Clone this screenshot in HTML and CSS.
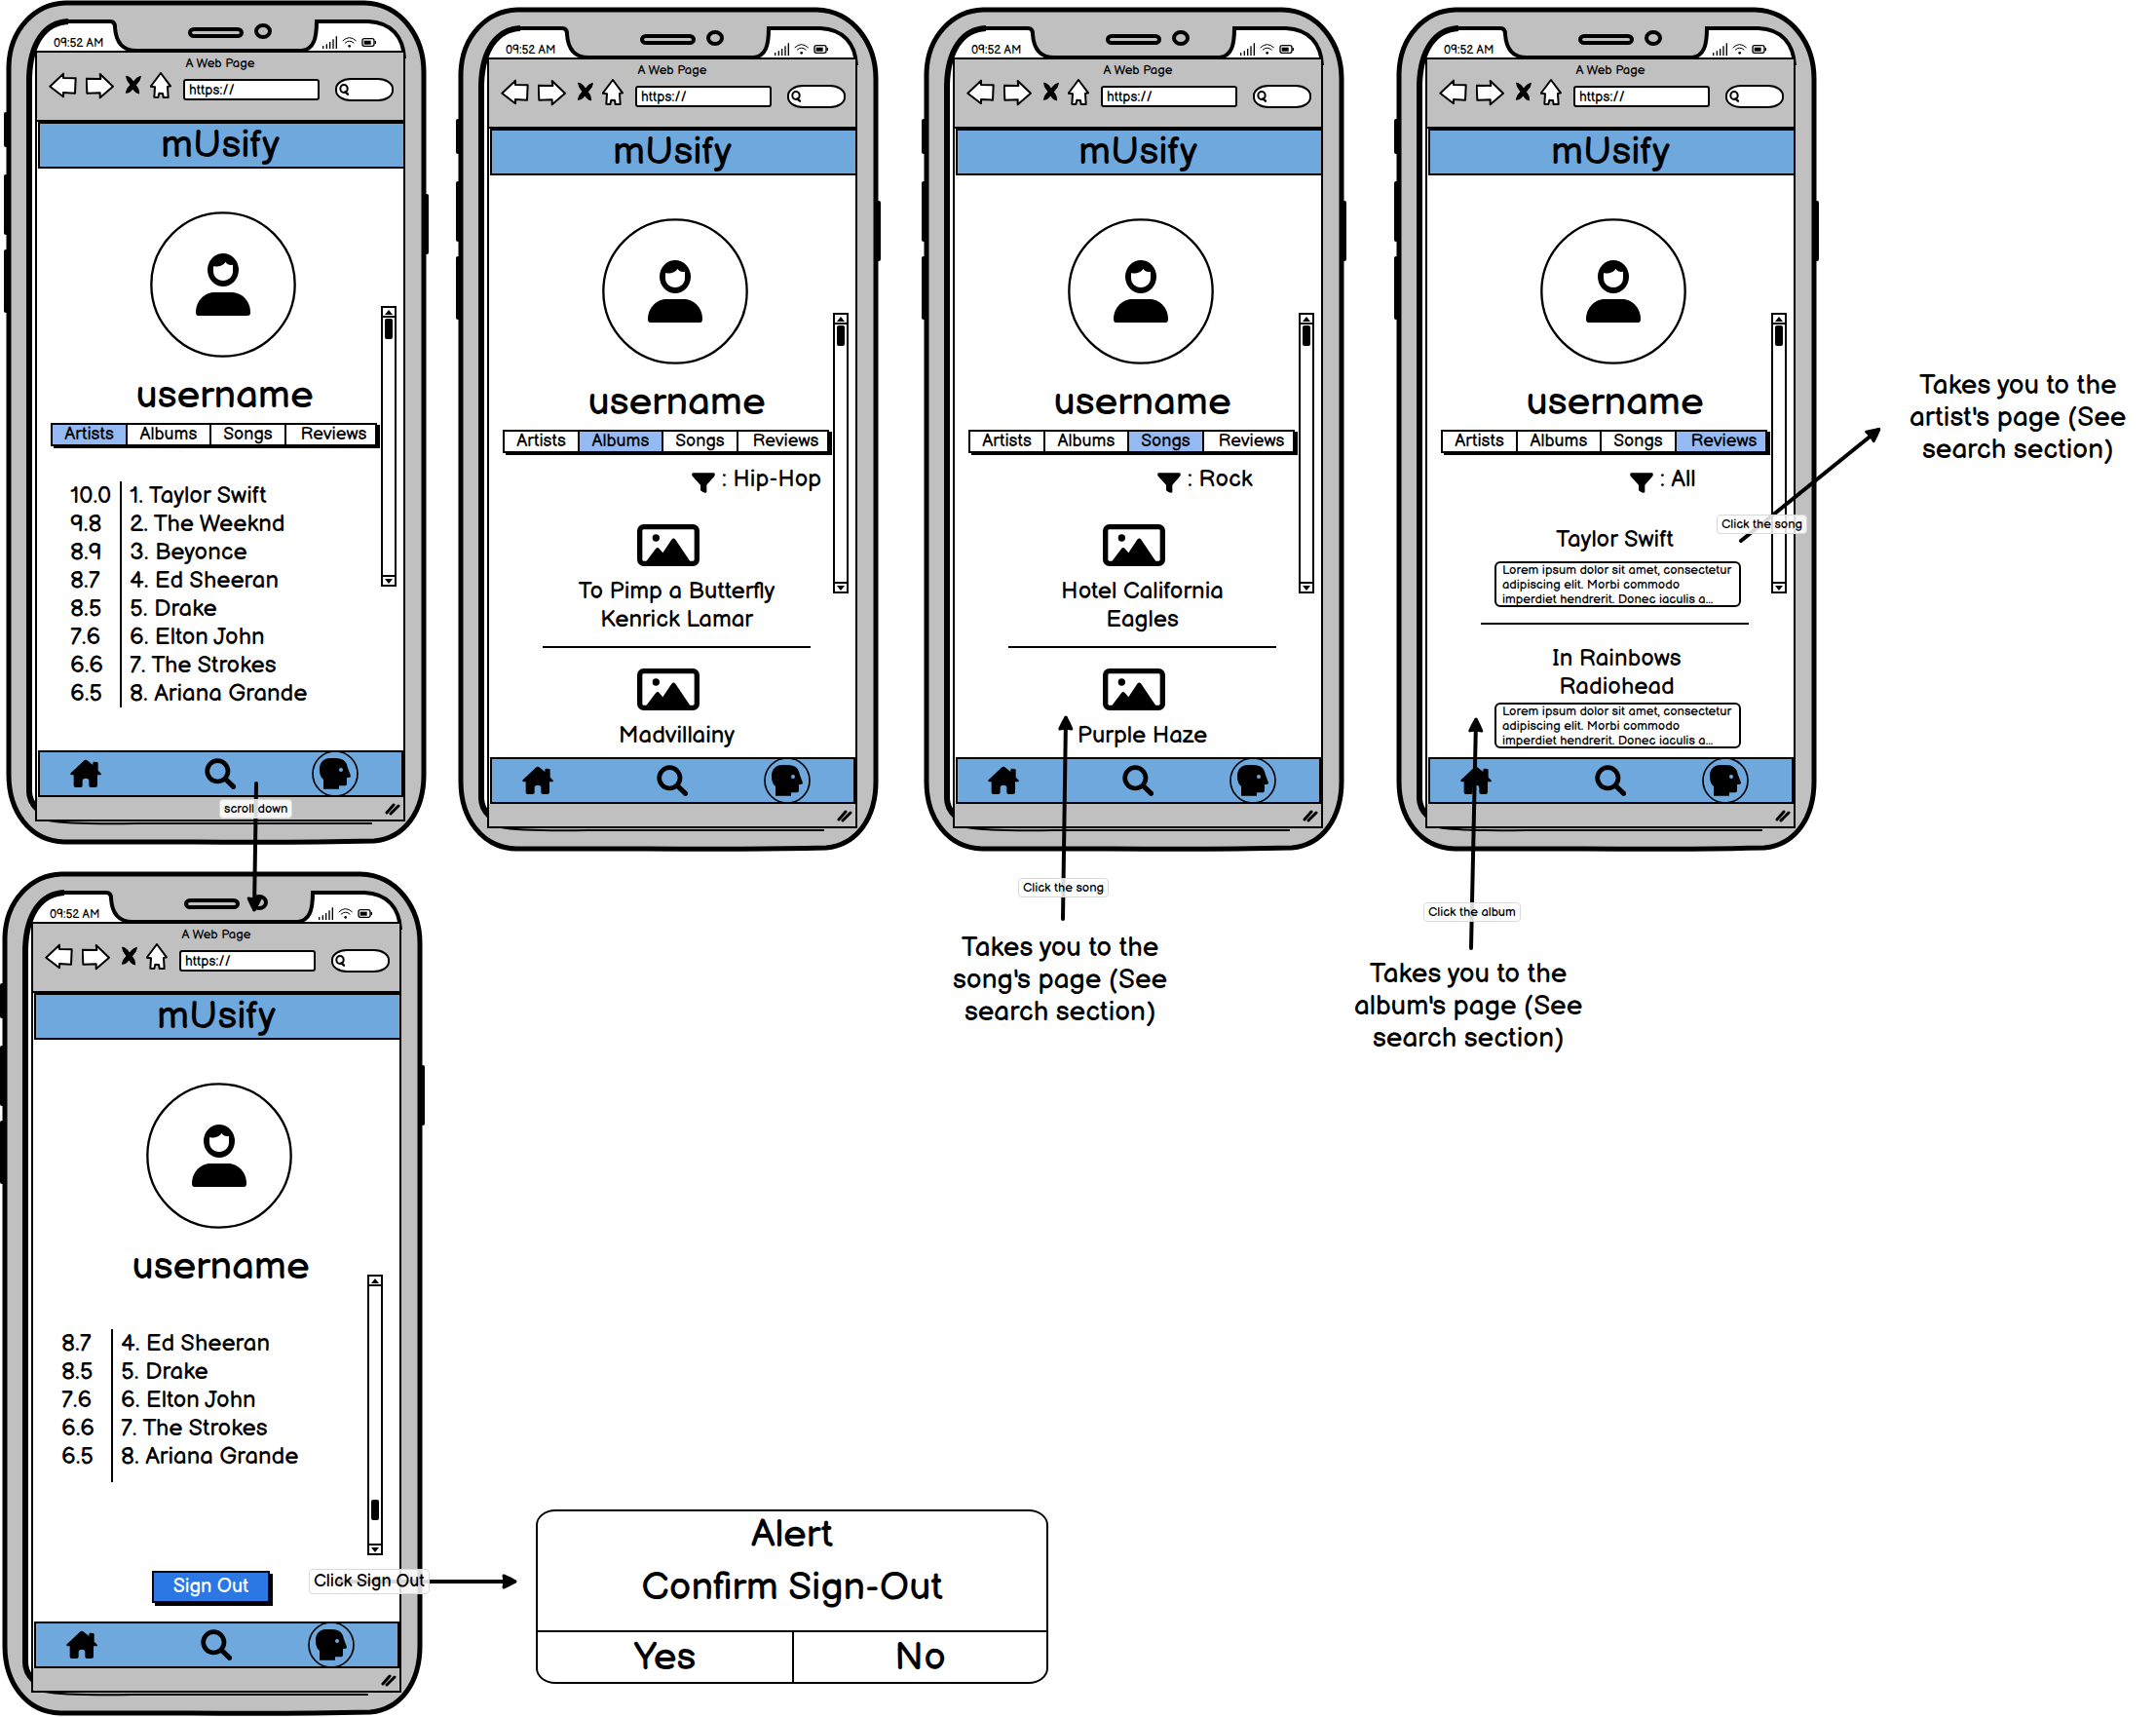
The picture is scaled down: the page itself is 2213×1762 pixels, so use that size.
FILE: index.html
```html
<!DOCTYPE html>
<html lang="en">
<head>
<meta charset="utf-8">
<meta name="viewport" content="width=device-width, initial-scale=1">
<title>mUsify profile wireframes</title>
<link rel="stylesheet" href="styles.css">
</head>
<body>
<svg class="sprite" aria-hidden="true">
  <symbol id="frame" viewBox="0 0 444 868">
    <g fill="#000">
      <rect x="4" y="115" width="6" height="36" rx="2"/><rect x="4" y="179" width="6" height="62" rx="2"/>
      <rect x="4" y="256" width="6" height="65" rx="2"/><rect x="433" y="199" width="7" height="62" rx="2"/>
    </g>
    <path d="M67 3H374C412 4 435 38 435 74V795C435 832 416 860 384 863Q300 865 200 864H66C30 863 9 832 9 795V68C10 30 36 4 67 3Z" fill="#c0c0c0" stroke="#000" stroke-width="5"/>
    <path d="M30 812V80C31 44 46 23 70 22H113Q118 22 118 28C119 44 126 52 140 52H310C322 50 325 40 325 22H378C402 23 414 38 415 60V830H39Q30 822 30 812Z" fill="#fff"/>
    <path d="M38 830Q30 822 30 812V80C31 44 46 23 70 22" fill="none" stroke="#000" stroke-width="6"/>
    <path d="M69 22H113Q118 22 118 28C119 44 126 52 140 52H310C322 50 325 40 325 22H378C402 23 414 38 415 60" fill="none" stroke="#000" stroke-width="4"/>
    <path d="M50 842Q70 846 140 845H382" fill="none" stroke="#000" stroke-width="2"/>
    <rect x="195" y="30" width="53" height="7" rx="4" fill="none" stroke="#000" stroke-width="4"/>
    <ellipse cx="270" cy="32" rx="7" ry="6" fill="none" stroke="#000" stroke-width="4"/>
  </symbol>
  <symbol id="status" viewBox="990 108 168 45">
    <g fill="none" stroke="#000" stroke-width="4">
      <path d="M995 141V150M1006 136V150M1016 129V150M1026 121V150M1036 112V150"/>
      <path d="M1055 126Q1076 106 1097 126M1062 133Q1076 120 1090 133" stroke-width="3"/>
      <rect x="1116" y="119" width="36" height="23" rx="6"/><path d="M1156 126V135"/>
    </g>
    <rect x="1121" y="125" width="21" height="12"/><circle cx="1076" cy="142" r="4"/>
  </symbol>
  <symbol id="back" viewBox="150 222 90 90"><path d="M154 266L195 227V240L233 241L231 287L195 285V298Z" class="sketch"/></symbol>
  <symbol id="forward" viewBox="264 222 90 90"><path d="M266 242L310 243L308 228L348 266L308 301V286L268 287Z" class="sketch"/></symbol>
  <symbol id="stop" viewBox="378 222 60 90"><path d="M389 234Q401 236 411 252Q420 238 433 235Q434 246 418 262Q428 272 428 288Q416 286 409 273Q400 287 388 286Q390 272 402 261Q388 246 389 234Z" stroke="#000" stroke-width="3" stroke-linejoin="round"/></symbol>
  <symbol id="home-outline" viewBox="462 222 78 90"><path d="M495 225L525 265L516 267L518 300L503 300L501 288L490 287L487 300L475 299L477 268L464 266Z" class="sketch"/></symbol>
  <symbol id="lens" viewBox="1040 258 36 42"><ellipse cx="1058" cy="276" rx="11" ry="12" fill="none" stroke="#000" stroke-width="6"/><path d="M1062 286L1070 293" stroke="#000" stroke-width="7" stroke-linecap="round"/></symbol>
  <symbol id="avatar" viewBox="462 51 450 450">
    <circle cx="687" cy="276" r="221" fill="#fff" stroke="#000" stroke-width="7"/>
    <ellipse cx="687" cy="231" rx="48" ry="51"/>
    <path d="M657 220C675 222 690 216 694 206C700 215 708 217 717 215V235C717 252 704 264 687 264C670 264 657 252 657 235Z" fill="#fff"/>
    <path d="M603 362C603 322 635 300 660 300H714C740 300 771 322 771 362Q771 372 761 372H613Q603 372 603 362Z"/>
  </symbol>
  <symbol id="house" viewBox="216 717 96 96"><path d="M258 725Q264 719 270 725L286 738V731Q287 728 290 728L298 729Q302 729 302 733V755L311 764Q313 769 308 769H300V800Q300 807 293 807H280Q274 807 274 801V785Q273 779 264 779Q255 779 254 785V801Q254 807 248 807H233Q227 807 227 800V769H220Q215 768 218 763Z"/></symbol>
  <symbol id="search" viewBox="629 716 96 96"><circle cx="669" cy="756" r="32" fill="none" stroke="#000" stroke-width="14"/><path d="M694 781L718 804" stroke="#000" stroke-width="15" stroke-linecap="round"/></symbol>
  <symbol id="head" viewBox="960 693 144 144">
    <circle cx="1032" cy="765" r="69" fill="none" stroke="#000" stroke-width="5"/>
    <path d="M1016 717H1034C1056 717 1068 728 1070 745L1080 772Q1080 777 1074 777H1068V795Q1068 802 1060 802H1044V812H996V783C986 774 984 764 984 750C984 730 998 717 1016 717Z"/>
    <circle cx="1050" cy="753" r="6" fill="#6fa8dc"/>
  </symbol>
  <symbol id="funnel" viewBox="750 166 72 63"><path d="M753 167H819Q824 171 819 178L796 204V227Q788 231 777 221V204L753 178Q748 171 753 167Z"/></symbol>
  <symbol id="picture" viewBox="582 326 192 129">
    <rect x="590" y="334" width="176" height="113" rx="12" fill="#fff" stroke="#000" stroke-width="16"/>
    <circle cx="640" cy="368" r="11"/><path d="M610 440L640 400Q645 395 650 401L661 414L688 373Q694 366 700 373L745 440Z"/>
  </symbol>
  <symbol id="grip" viewBox="0 0 16 14"><path d="M2 11L9 3M6 12L14 4" stroke="#000" stroke-width="3" stroke-linecap="round"/></symbol>
</svg>

<main class="board">

  <section class="phone phone-artists" aria-label="Profile, artists">
    <svg class="frame" aria-hidden="true"><use href="#frame"/></svg>
    <div class="device">
      <div class="status"><span>09:52 AM</span><svg class="status-icons"><use href="#status"/></svg></div>
      <div class="browser">
        <header class="chrome">
          <div class="page-title">A Web Page</div>
          <div class="toolbar">
            <button class="tool" aria-label="Back"><svg><use href="#back"/></svg></button>
            <button class="tool" aria-label="Forward"><svg><use href="#forward"/></svg></button>
            <button class="tool tool-stop" aria-label="Stop"><svg><use href="#stop"/></svg></button>
            <button class="tool tool-home" aria-label="Home"><svg><use href="#home-outline"/></svg></button>
            <input class="url" type="text" value="https://" aria-label="Address">
            <label class="find"><svg><use href="#lens"/></svg><input type="text" aria-label="Search the web"></label>
          </div>
        </header>
        <h1 class="brand">mUsify</h1>
        <div class="content">
          <div class="column">
            <svg class="avatar"><use href="#avatar"/></svg>
            <h2 class="username">username</h2>
            <div class="tabs">
              <button class="tab selected">Artists</button><button class="tab">Albums</button><button class="tab">Songs</button><button class="tab">Reviews</button>
            </div>
            <table class="scores">
              <tr><td>10.0</td><td>1. Taylor Swift</td></tr>
              <tr><td>9.8</td><td>2. The Weeknd</td></tr>
              <tr><td>8.9</td><td>3. Beyonce</td></tr>
              <tr><td>8.7</td><td>4. Ed Sheeran</td></tr>
              <tr><td>8.5</td><td>5. Drake</td></tr>
              <tr><td>7.6</td><td>6. Elton John</td></tr>
              <tr><td>6.6</td><td>7. The Strokes</td></tr>
              <tr><td>6.5</td><td>8. Ariana Grande</td></tr>
            </table>
          </div>
          <div class="scrollbar"><i class="up"></i><div class="track"><div class="thumb"></div></div><i class="down"></i></div>
        </div>
        <nav class="nav">
          <a class="nav-home" href="#" aria-label="Home"><svg><use href="#house"/></svg></a>
          <a class="nav-search" href="#" aria-label="Search"><svg><use href="#search"/></svg></a>
          <a class="nav-profile" href="#" aria-label="Profile"><svg><use href="#head"/></svg></a>
        </nav>
        <footer class="foot"><svg class="grip"><use href="#grip"/></svg></footer>
      </div>
    </div>
  </section>

  <section class="phone phone-albums" aria-label="Profile, albums">
    <svg class="frame" aria-hidden="true"><use href="#frame"/></svg>
    <div class="device">
      <div class="status"><span>09:52 AM</span><svg class="status-icons"><use href="#status"/></svg></div>
      <div class="browser">
        <header class="chrome">
          <div class="page-title">A Web Page</div>
          <div class="toolbar">
            <button class="tool" aria-label="Back"><svg><use href="#back"/></svg></button>
            <button class="tool" aria-label="Forward"><svg><use href="#forward"/></svg></button>
            <button class="tool tool-stop" aria-label="Stop"><svg><use href="#stop"/></svg></button>
            <button class="tool tool-home" aria-label="Home"><svg><use href="#home-outline"/></svg></button>
            <input class="url" type="text" value="https://" aria-label="Address">
            <label class="find"><svg><use href="#lens"/></svg><input type="text" aria-label="Search the web"></label>
          </div>
        </header>
        <h1 class="brand">mUsify</h1>
        <div class="content">
          <div class="column">
            <svg class="avatar"><use href="#avatar"/></svg>
            <h2 class="username">username</h2>
            <div class="tabs">
              <button class="tab">Artists</button><button class="tab selected">Albums</button><button class="tab">Songs</button><button class="tab">Reviews</button>
            </div>
            <div class="filter"><svg><use href="#funnel"/></svg><span>: Hip-Hop</span></div>
            <article class="item"><svg class="picture"><use href="#picture"/></svg><p>To Pimp a Butterfly<br>Kenrick Lamar</p></article>
            <hr>
            <article class="item"><svg class="picture"><use href="#picture"/></svg><p>Madvillainy</p></article>
          </div>
          <div class="scrollbar"><i class="up"></i><div class="track"><div class="thumb"></div></div><i class="down"></i></div>
        </div>
        <nav class="nav">
          <a class="nav-home" href="#" aria-label="Home"><svg><use href="#house"/></svg></a>
          <a class="nav-search" href="#" aria-label="Search"><svg><use href="#search"/></svg></a>
          <a class="nav-profile" href="#" aria-label="Profile"><svg><use href="#head"/></svg></a>
        </nav>
        <footer class="foot"><svg class="grip"><use href="#grip"/></svg></footer>
      </div>
    </div>
  </section>

  <section class="phone phone-songs" aria-label="Profile, songs">
    <svg class="frame" aria-hidden="true"><use href="#frame"/></svg>
    <div class="device">
      <div class="status"><span>09:52 AM</span><svg class="status-icons"><use href="#status"/></svg></div>
      <div class="browser">
        <header class="chrome">
          <div class="page-title">A Web Page</div>
          <div class="toolbar">
            <button class="tool" aria-label="Back"><svg><use href="#back"/></svg></button>
            <button class="tool" aria-label="Forward"><svg><use href="#forward"/></svg></button>
            <button class="tool tool-stop" aria-label="Stop"><svg><use href="#stop"/></svg></button>
            <button class="tool tool-home" aria-label="Home"><svg><use href="#home-outline"/></svg></button>
            <input class="url" type="text" value="https://" aria-label="Address">
            <label class="find"><svg><use href="#lens"/></svg><input type="text" aria-label="Search the web"></label>
          </div>
        </header>
        <h1 class="brand">mUsify</h1>
        <div class="content">
          <div class="column">
            <svg class="avatar"><use href="#avatar"/></svg>
            <h2 class="username">username</h2>
            <div class="tabs">
              <button class="tab">Artists</button><button class="tab">Albums</button><button class="tab selected">Songs</button><button class="tab">Reviews</button>
            </div>
            <div class="filter"><svg><use href="#funnel"/></svg><span>: Rock</span></div>
            <article class="item"><svg class="picture"><use href="#picture"/></svg><p>Hotel California<br>Eagles</p></article>
            <hr>
            <article class="item"><svg class="picture"><use href="#picture"/></svg><p>Purple Haze</p></article>
          </div>
          <div class="scrollbar"><i class="up"></i><div class="track"><div class="thumb"></div></div><i class="down"></i></div>
        </div>
        <nav class="nav">
          <a class="nav-home" href="#" aria-label="Home"><svg><use href="#house"/></svg></a>
          <a class="nav-search" href="#" aria-label="Search"><svg><use href="#search"/></svg></a>
          <a class="nav-profile" href="#" aria-label="Profile"><svg><use href="#head"/></svg></a>
        </nav>
        <footer class="foot"><svg class="grip"><use href="#grip"/></svg></footer>
      </div>
    </div>
  </section>

  <section class="phone phone-reviews" aria-label="Profile, reviews">
    <svg class="frame" aria-hidden="true"><use href="#frame"/></svg>
    <div class="device">
      <div class="status"><span>09:52 AM</span><svg class="status-icons"><use href="#status"/></svg></div>
      <div class="browser">
        <header class="chrome">
          <div class="page-title">A Web Page</div>
          <div class="toolbar">
            <button class="tool" aria-label="Back"><svg><use href="#back"/></svg></button>
            <button class="tool" aria-label="Forward"><svg><use href="#forward"/></svg></button>
            <button class="tool tool-stop" aria-label="Stop"><svg><use href="#stop"/></svg></button>
            <button class="tool tool-home" aria-label="Home"><svg><use href="#home-outline"/></svg></button>
            <input class="url" type="text" value="https://" aria-label="Address">
            <label class="find"><svg><use href="#lens"/></svg><input type="text" aria-label="Search the web"></label>
          </div>
        </header>
        <h1 class="brand">mUsify</h1>
        <div class="content">
          <div class="column">
            <svg class="avatar"><use href="#avatar"/></svg>
            <h2 class="username">username</h2>
            <div class="tabs">
              <button class="tab">Artists</button><button class="tab">Albums</button><button class="tab">Songs</button><button class="tab selected">Reviews</button>
            </div>
            <div class="filter"><svg><use href="#funnel"/></svg><span>: All</span></div>
            <article class="review"><p>Taylor Swift</p><div class="excerpt">Lorem ipsum dolor sit amet, consectetur<br>adipiscing elit. Morbi commodo<br>imperdiet hendrerit. Donec iaculis a...</div></article>
            <hr>
            <article class="review"><p>In Rainbows<br>Radiohead</p><div class="excerpt">Lorem ipsum dolor sit amet, consectetur<br>adipiscing elit. Morbi commodo<br>imperdiet hendrerit. Donec iaculis a...</div></article>
          </div>
          <div class="scrollbar"><i class="up"></i><div class="track"><div class="thumb"></div></div><i class="down"></i></div>
        </div>
        <nav class="nav">
          <a class="nav-home" href="#" aria-label="Home"><svg><use href="#house"/></svg></a>
          <a class="nav-search" href="#" aria-label="Search"><svg><use href="#search"/></svg></a>
          <a class="nav-profile" href="#" aria-label="Profile"><svg><use href="#head"/></svg></a>
        </nav>
        <footer class="foot"><svg class="grip"><use href="#grip"/></svg></footer>
      </div>
    </div>
  </section>

  <section class="phone phone-signout" aria-label="Profile, scrolled to sign out">
    <svg class="frame" aria-hidden="true"><use href="#frame"/></svg>
    <div class="device">
      <div class="status"><span>09:52 AM</span><svg class="status-icons"><use href="#status"/></svg></div>
      <div class="browser">
        <header class="chrome">
          <div class="page-title">A Web Page</div>
          <div class="toolbar">
            <button class="tool" aria-label="Back"><svg><use href="#back"/></svg></button>
            <button class="tool" aria-label="Forward"><svg><use href="#forward"/></svg></button>
            <button class="tool tool-stop" aria-label="Stop"><svg><use href="#stop"/></svg></button>
            <button class="tool tool-home" aria-label="Home"><svg><use href="#home-outline"/></svg></button>
            <input class="url" type="text" value="https://" aria-label="Address">
            <label class="find"><svg><use href="#lens"/></svg><input type="text" aria-label="Search the web"></label>
          </div>
        </header>
        <h1 class="brand">mUsify</h1>
        <div class="content scrolled">
          <div class="column">
            <svg class="avatar"><use href="#avatar"/></svg>
            <h2 class="username">username</h2>
            <table class="scores">
              <tr><td>8.7</td><td>4. Ed Sheeran</td></tr>
              <tr><td>8.5</td><td>5. Drake</td></tr>
              <tr><td>7.6</td><td>6. Elton John</td></tr>
              <tr><td>6.6</td><td>7. The Strokes</td></tr>
              <tr><td>6.5</td><td>8. Ariana Grande</td></tr>
            </table>
            <button class="sign-out">Sign Out</button>
          </div>
          <div class="scrollbar"><i class="up"></i><div class="track"><div class="thumb"></div></div><i class="down"></i></div>
        </div>
        <nav class="nav">
          <a class="nav-home" href="#" aria-label="Home"><svg><use href="#house"/></svg></a>
          <a class="nav-search" href="#" aria-label="Search"><svg><use href="#search"/></svg></a>
          <a class="nav-profile" href="#" aria-label="Profile"><svg><use href="#head"/></svg></a>
        </nav>
        <footer class="foot"><svg class="grip"><use href="#grip"/></svg></footer>
      </div>
    </div>
  </section>

  <section class="alert" role="alertdialog" aria-labelledby="alert-title">
    <div class="alert-text"><h2 id="alert-title">Alert</h2><p>Confirm Sign-Out</p></div>
    <div class="alert-actions"><button>Yes</button><button>No</button></div>
  </section>

  <p class="note note-artist">Takes you to the<br>artist's page (See<br>search section)</p>
  <p class="note note-song">Takes you to the<br>song's page (See<br>search section)</p>
  <p class="note note-album">Takes you to the<br>album's page (See<br>search section)</p>

  <svg class="arrows" width="2213" height="1762" aria-hidden="true">
    <defs>
      <marker id="tip" markerUnits="userSpaceOnUse" markerWidth="20" markerHeight="20" refX="14" refY="10" orient="auto">
        <path d="M3 4Q10 7 15 10Q10 13 3 16L4 10Z" stroke="#000" stroke-width="3" stroke-linejoin="round"/>
      </marker>
    </defs>
    <g fill="none" stroke="#000" stroke-width="4" stroke-linecap="round">
      <path d="M263 804L261 933" marker-end="url(#tip)"/>
      <path d="M1091 943L1094 737" marker-end="url(#tip)"/>
      <path d="M1510 973L1515 739" marker-end="url(#tip)"/>
      <path d="M1787 555L1928 441" marker-end="url(#tip)"/>
      <path d="M346 1623H528" marker-end="url(#tip)"/>
    </g>
  </svg>
  <span class="label label-scroll">scroll down</span>
  <span class="label label-song">Click the song</span>
  <span class="label label-album">Click the album</span>
  <span class="label label-artist">Click the song</span>
  <span class="label label-signout">Click Sign Out</span>
</main>
</body>
</html>
```
FILE: styles.css
```css
* { box-sizing: border-box; }

body {
  margin: 0;
  background: #fff;
  color: #000;
  font-family: "Balsamiq Sans", "Comic Neue", cursive;
  font-size: 24px;
  line-height: 29px;
}

h1, h2, p { margin: 0; font-weight: 400; }
svg { display: block; }
button, input { font: inherit; color: inherit; margin: 0; padding: 0; border: 0; background: none; }
.sprite { width: 0; height: 0; overflow: hidden; position: absolute; }
.sketch { fill: #fff; stroke: #000; stroke-width: 6; stroke-linejoin: round; }

/* Whiteboard: phones, notes and arrows are pinned to the canvas */
.board { position: relative; min-height: 1762px; overflow: hidden; }
.phone { position: absolute; display: grid; width: 444px; }
.phone-artists { left: 0; top: 0; }
.phone-albums { left: 464px; top: 7px; }
.phone-songs { left: 942px; top: 7px; }
.phone-reviews { left: 1427px; top: 7px; }
.phone-signout { left: -4px; top: 894px; }

.frame, .device { grid-area: 1 / 1; }
.frame { width: 100%; height: 868px; }
.device { display: flex; flex-direction: column; padding: 36px 28px 0 36px; }

.status {
  display: flex;
  justify-content: space-between;
  height: 16px;
  padding: 0 30px 0 19px;
  font-size: 12px;
  line-height: 17px;
}
.status-icons { width: 56px; height: 15px; }

.browser { border: 2px solid #000; }

.chrome { height: 71px; padding-top: 3px; background: #c0c0c0; border-bottom: 2px solid #000; }
.page-title { font-size: 13px; line-height: 16px; text-align: center; }
.toolbar { display: flex; align-items: flex-end; gap: 8px; height: 31px; padding: 0 10px 0 12px; }
.tool { width: 30px; height: 30px; }
.tool-stop { width: 20px; }
.tool-home { width: 26px; }
.tool svg { width: 100%; height: 100%; }
.url {
  width: 140px;
  height: 22px;
  margin-bottom: 1px;
  padding: 0 4px;
  background: #fff;
  border: 2px solid #000;
  border-radius: 3px;
  font-size: 14px;
  line-height: 18px;
}
.find {
  display: flex;
  align-items: center;
  width: 60px;
  height: 24px;
  margin-left: auto;
  padding-left: 1px;
  background: #fff;
  border: 2px solid #000;
  border-radius: 16px / 11px;
}
.find svg { flex: none; width: 12px; height: 14px; }
.find input { width: 36px; }

.brand {
  height: 48px;
  margin: 0 -2px 0 1px;
  padding-right: 3px;
  background: #6fa8dc;
  border: 2px solid #000;
  font-size: 40px;
  line-height: 44px;
  text-align: center;
}

.content { display: flex; align-items: flex-start; height: 597px; padding-left: 15px; background: #fff; }
.column { display: flex; flex-direction: column; width: 337px; }
.avatar { width: 150px; height: 150px; margin: 44px 0 15px 101px; }
.username { padding-left: 18px; font-size: 40px; line-height: 48px; text-align: center; }

.tabs {
  display: grid;
  grid-template-columns: 77px 86px 77px 91px;
  width: 335px;
  height: 24px;
  margin: 4px 0 0 -1px;
  border: 2px solid #000;
  box-shadow: 3px 2px 0 #000;
}
.tab { background: #fff; border-right: 2px solid #000; font-size: 18px; line-height: 20px; }
.tab:last-child { padding-left: 6px; border-right: 0; }
.tab.selected { background: #94b9f3; }

.scores { width: 240px; table-layout: fixed; margin: 36px 0 0 19px; border-spacing: 0; }
.scores td { padding: 0; vertical-align: top; white-space: nowrap; }
.scores td:first-child { width: 51px; }
.scores td:last-child { padding-left: 8px; border-left: 2px solid #000; }
.scrolled .scores { margin: 40px 0 0 14px; }
.scrolled .scores tr:last-child td { padding-bottom: 12px; }

.sign-out {
  width: 121px;
  height: 33px;
  margin: 91px 0 0 107px;
  background: #2b78e4;
  border: 2px solid #000;
  box-shadow: 3px 3px 0 #000;
  color: #fff;
  font-size: 20px;
  line-height: 29px;
}

.filter { display: flex; align-items: flex-end; gap: 7px; margin: 12px 0 32px 193px; }
.filter svg { width: 24px; height: 21px; }

.item, .review { text-align: center; }
.picture { width: 64px; height: 43px; margin: 0 auto 11px; }
.item p, .review p { padding-left: 18px; }
hr { width: 275px; margin: 13px 0 21px 40px; border: 0; border-top: 2px solid #000; }

.excerpt {
  width: 253px;
  height: 47px;
  margin: 8px 0 0 54px;
  padding-left: 6px;
  border: 2px solid #000;
  border-radius: 6px;
  font-size: 13px;
  line-height: 15px;
  text-align: left;
  white-space: nowrap;
}
.filter + .review { padding-top: 1px; }
.review + hr { margin: 16px 0 20px 40px; }
hr + .review .excerpt { margin-top: 2px; }
hr + .review p { padding-left: 22px; }

.scrollbar {
  display: flex;
  flex-direction: column;
  width: 16px;
  height: 288px;
  margin: 141px 0 0 1px;
  border: 2px solid #000;
}
.scrolled .scrollbar { margin: 241px 0 0 -9px; }
.up, .down { display: flex; justify-content: center; align-items: center; flex: none; height: 10px; }
.up { border-bottom: 2px solid #000; }
.down { border-top: 2px solid #000; }
.up::before, .down::before { content: ""; border: 4px solid transparent; }
.up::before { border-top: 0; border-bottom: 5px solid #000; }
.down::before { border-bottom: 0; border-top: 5px solid #000; }
.track { display: flex; flex: 1; justify-content: center; padding: 1px 0; }
.thumb { width: 8px; height: 21px; background: #000; border-radius: 2px; }
.scrolled .track { align-items: flex-end; padding-bottom: 24px; }

.nav {
  display: flex;
  align-items: center;
  height: 48px;
  margin-left: 1px;
  padding-left: 31px;
  background: #6fa8dc;
  border: 2px solid #000;
}
.nav svg { width: 32px; height: 32px; }
.nav-search { margin-left: 106px; }
.nav-profile { margin-left: 78px; }
.nav-profile svg { width: 48px; height: 48px; }

.foot { display: flex; justify-content: flex-end; align-items: center; height: 23px; padding-right: 3px; background: #c0c0c0; }
.grip { width: 16px; height: 14px; }

.alert {
  position: absolute;
  left: 550px;
  top: 1549px;
  display: flex;
  flex-direction: column;
  width: 526px;
  border: 2px solid #000;
  border-radius: 20px / 16px;
  font-size: 40px;
  line-height: 48px;
  text-align: center;
}
.alert h2 { font-size: 40px; }
.alert-text { display: grid; gap: 6px; height: 122px; align-content: start; }
.alert-actions { display: grid; grid-template-columns: 1fr 1fr; height: 53px; border-top: 2px solid #000; }
.alert-actions button + button { border-left: 2px solid #000; }

.note { position: absolute; font-size: 28px; line-height: 33px; text-align: center; white-space: nowrap; }
.note-artist { left: 1960px; top: 379px; }
.note-song { left: 978px; top: 956px; }
.note-album { left: 1390px; top: 983px; }

.arrows { position: absolute; left: 0; top: 0; pointer-events: none; }

.label {
  position: absolute;
  padding: 0 4px;
  background: rgba(255, 255, 255, 0.85);
  border: 1px solid #d9d9d9;
  border-radius: 4px;
  font-size: 13px;
  line-height: 18px;
  white-space: nowrap;
}
.label-scroll { left: 225px; top: 820px; }
.label-song { left: 1045px; top: 901px; }
.label-album { left: 1461px; top: 926px; }
.label-artist { left: 1762px; top: 528px; }
.label-signout { left: 317px; top: 1610px; font-size: 18px; line-height: 24px; }
```
